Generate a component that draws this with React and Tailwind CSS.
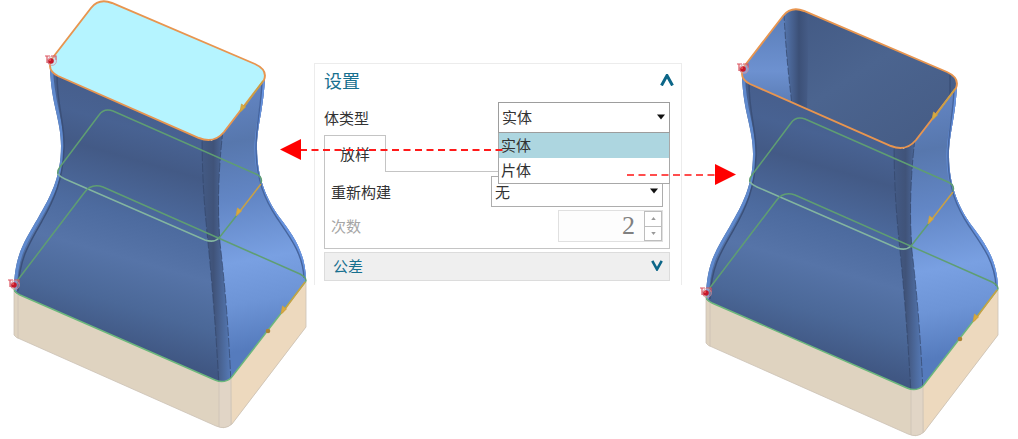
import React, { useState } from "react";

const bodyTypes = ["实体", "片体"];

const RIM =
  "M50 66 Q50 61 54 56 L91 8 Q99 -2 112 3 L255 64 Q268 70 264 80 L224 132 Q214 144 199 138 L58 76 Q50 72 50 66 Z";

const BODY =
  "M50 68 C51 104 61 120 61 146 C61 178 50 197 38 218 C24 242 14 256 14 291 Q15 293 20 295 L215 380 Q224 384 231 378 L306 281 C306 252 292 234 280 218 C267 200 257 178 257 148 C257 125 264 108 265 76 L212 141 Z";

const OriginMark = ({ x, y }) => (
  <g>
    <path d={`M${x - 6} ${y - 5}h5m-3 0v7m0 -4l2 5m2 -8h5v4`} stroke="#dc5560" strokeWidth="1.2" fill="none" />
    <circle cx={x + 1} cy={y} r="4.5" fill="#e8c0c8" fillOpacity="0.35" stroke="#c98a98" strokeOpacity="0.6" />
    <circle cx={x} cy={y} r="2.8" fill="#c5182a" />
    <circle cx={x - 1} cy={y - 1} r="1" fill="#ee5a5a" />
  </g>
);

const DirectionArrow = ({ x1, y1, x2, y2 }) => (
  <g stroke="#c9a144" fill="#d9aa3c">
    <path d={`M${x1} ${y1}L${x2} ${y2}`} strokeWidth="1.5" />
    <path d={`M${x2 - 1} ${y2 + 1}l1.500 -8 4 3z`} strokeWidth="0.8" />
  </g>
);

const LoftModel = ({ id, label, solid, shift, viewBox }) => (
  <svg viewBox={viewBox} className="block w-full h-auto" role="img" aria-label={label}>
    <defs>
      <linearGradient id={`${id}-front`} gradientUnits="userSpaceOnUse" x1="150" y1="90" x2="80" y2="335">
        <stop offset="0" stopColor="#465d8a" />
        <stop offset="0.16" stopColor="#486292" />
        <stop offset="0.28" stopColor="#435a86" />
        <stop offset="0.5" stopColor="#4d6b9f" />
        <stop offset="0.66" stopColor="#5674a8" />
        <stop offset="0.84" stopColor="#4b6898" />
        <stop offset="1" stopColor="#405783" />
      </linearGradient>
      <linearGradient id={`${id}-side`} gradientUnits="userSpaceOnUse" x1="230" y1="90" x2="275" y2="345">
        <stop offset="0" stopColor="#6385c3" />
        <stop offset="0.2" stopColor="#5777ad" />
        <stop offset="0.42" stopColor="#6286c5" />
        <stop offset="0.66" stopColor="#79a0e2" />
        <stop offset="0.82" stopColor="#6d94d6" />
        <stop offset="1" stopColor="#557bbd" />
      </linearGradient>
      <linearGradient id={`${id}-corner`} x1="0" y1="0" x2="1" y2="0">
        <stop offset="0" stopColor="#435a85" />
        <stop offset="0.4" stopColor="#405379" />
        <stop offset="1" stopColor="#567bb8" />
      </linearGradient>
      <linearGradient id={`${id}-inner`} x1="0" y1="0" x2="1" y2="1">
        <stop offset="0" stopColor="#405680" />
        <stop offset="0.5" stopColor="#4b648f" />
        <stop offset="1" stopColor="#455b84" />
      </linearGradient>
      <linearGradient id={`${id}-innerSide`} x1="0" y1="0" x2="0" y2="1">
        <stop offset="0" stopColor="#587bb5" />
        <stop offset="0.6" stopColor="#6d91d0" />
        <stop offset="1" stopColor="#5576ad" />
      </linearGradient>
      <linearGradient id={`${id}-fold`} x1="0" y1="0" x2="1" y2="0">
        <stop offset="0" stopColor="#5576ae" />
        <stop offset="0.6" stopColor="#3c5077" />
        <stop offset="1" stopColor="#465d88" />
      </linearGradient>
      <clipPath id={`${id}-body`}>
        <path d={BODY} />
      </clipPath>
      <clipPath id={`${id}-rim`}>
        <path d={RIM} />
      </clipPath>
    </defs>

    <g transform={shift}>
      {/* Base block */}
      <path d="M14 288 V335 Q16 338 20 339 L216 426 Q225 430 232 424 L306 327 V279 L224 381 Z" fill="#dfd3c0" />
      <path d="M231 378 L306 281 V327 L232 424 Z" fill="#edd9be" />
      <path d="M219 380 H231 V425 Q225 430 219 427 Z" fill="#e1d5c6" />
      <path
        d="M14 290 V335 Q16 338 20 339 L216 426 Q225 430 232 424 L306 327 V281 M18 295 V338 M219 381 V427 M231 379 V425"
        fill="none"
        stroke="#cbc2b5"
        strokeWidth="0.8"
      />

      {/* Lofted body */}
      <g clipPath={`url(#${id}-body)`}>
        <path d="M0 0 H320 V400 H0 Z" fill={`url(#${id}-front)`} />
        <path d="M220 120 Q217 190 220 243 Q223 310 231 400 H320 V60 H240 Z" fill={`url(#${id}-side)`} />
        <path
          d="M202 130 C202 190 206 220 208 243 Q214 300 219 385 H231 Q228 310 220 243 Q216 190 223 130 Z"
          fill={`url(#${id}-corner)`}
        />
        <path
          d="M50 68 C51 104 61 120 61 146 C61 178 50 197 38 218 C24 242 14 256 14 291"
          fill="none"
          stroke="#5f89cd"
          strokeWidth="6"
        />
        <path
          d="M57 74 C57 108 65 122 64 148 C63 180 54 200 42 221 C28 245 19 260 18 291"
          fill="none"
          stroke="#3b5079"
          strokeWidth="1.5"
        />
        <path
          d="M265 76 C264 108 257 125 257 148 C257 178 267 200 280 218 C292 234 306 252 306 281"
          fill="none"
          stroke="#6793df"
          strokeWidth="5"
        />
        <path
          d="M262 82 C261 108 256 125 256 148 C256 180 265 200 277 218 C290 237 303 254 304 278"
          fill="none"
          stroke="#46659e"
          strokeWidth="1.4"
        />
        <g fill="none" stroke="#34466a" strokeWidth="0.7" strokeDasharray="9 2">
          <path d="M202 130 C202 190 206 220 208 243 Q214 300 219 385" />
          <path d="M223 130 Q216 190 220 243 Q228 310 231 385" />
        </g>
      </g>

      {/* Section curves */}
      <g fill="none" strokeWidth="1.5">
        <path
          d="M58 174 Q57 171 60 167 L99 115 Q104 108 113 111 L256 174 Q263 177 261 183 M237 215 L219 238"
          stroke="#5f9e72"
        />
        <path d="M58 174 Q60 177 65 179 L205 240 Q214 243 219 238" stroke="#83b5a0" />
        <path d="M17 281 L84 193 Q91 183 103 187 L300 274 Q306 277 306 281" stroke="#5f9e72" />
        <path d="M14 288 Q14 292 20 295 L215 380 Q224 384 231 378 L306 281" stroke="#6cb77c" />
      </g>

      {/* Top rim, capped when solid */}
      {solid ? (
        <path d={RIM} fill="#b5f4ff" />
      ) : (
        <g clipPath={`url(#${id}-rim)`}>
          <path d={RIM} fill={`url(#${id}-inner)`} />
          <path d="M45 80 V50 L93 0 Q92 40 102 105 Z" fill={`url(#${id}-innerSide)`} />
          <path d="M92 0 H117 L115 105 H101 Q95 60 92 0 Z" fill={`url(#${id}-fold)`} />
          <path d="M92 6 Q94 50 101 105" fill="none" stroke="#34466a" strokeWidth="0.7" strokeDasharray="7 2" />
          <path d="M258 62 V90" stroke="#34496f" />
        </g>
      )}
      <path d={RIM} fill="none" stroke="#e8954f" strokeWidth="1.9" />

      <DirectionArrow x1={263} y1={81} x2={241} y2={111} />
      <DirectionArrow x1={261} y1={184} x2={237} y2={215} />
      <DirectionArrow x1={305} y1={282} x2={282} y2={313} />
      <circle cx="268" cy="331" r="2.3" fill="#a98435" />
      <OriginMark x={51} y={61} />
      <OriginMark x={14} y={285} />
    </g>
  </svg>
);

const Caret = () => (
  <svg viewBox="0 0 8 6" className="pointer-events-none absolute right-[5px] top-3 h-[6px] w-2" aria-hidden="true">
    <path d="M0 0.5 H8 L4 5.5 Z" fill="#111" />
  </svg>
);

const Chevron = ({ down }) => (
  <svg viewBox="0 0 14 12" className={down ? "h-[11px] w-3 rotate-180" : "h-3 w-[14px]"} aria-hidden="true">
    <path d="M1.500 11.500 L7 1.500 L12.500 11.500" fill="none" stroke="#0c6688" strokeWidth="3" />
  </svg>
);

const SettingsPanel = () => {
  const [bodyType, setBodyType] = useState("实体");
  const [rebuild, setRebuild] = useState("无");

  return (
    <section className="relative mt-[63px] border border-b-0 border-[#ececec] bg-white pb-1 pl-[9px] pr-[11px] text-[15px] leading-5 text-[#333]">
      <header className="flex h-[38px] items-center justify-between pb-[7px]">
        <h2 className="text-[18px] leading-6 text-[#17708f]">设置</h2>
        <button type="button" aria-label="收起设置" className="-mr-1">
          <Chevron />
        </button>
      </header>

      {/* Body type with its open list */}
      <div className="flex h-[31px] items-center justify-between">
        <label htmlFor="body-type">体类型</label>
        <div className="relative w-[172px]">
          <select
            id="body-type"
            value={bodyType}
            onChange={(e) => setBodyType(e.target.value)}
            className="block h-[31px] w-full appearance-none border border-[#9d9d9d] bg-white px-[3px] pb-[2px]"
          >
            {bodyTypes.map((type) => (
              <option key={type}>{type}</option>
            ))}
          </select>
          <Caret />
          <ul
            role="listbox"
            aria-label="体类型"
            className="absolute left-0 top-full z-10 w-full border border-t-0 border-[#a8a8a8] bg-white"
          >
            {bodyTypes.map((type) => (
              <li
                key={type}
                role="option"
                aria-selected={type === bodyType}
                onClick={() => setBodyType(type)}
                className={`h-[25px] px-[2px] leading-6 ${type === bodyType ? "bg-[#add6e0]" : "bg-white"}`}
              >
                {type}
              </li>
            ))}
          </ul>
        </div>
      </div>

      {/* Loft tab */}
      <div className="mt-[2px] flex">
        <button type="button" className="h-[37px] w-[62px] border border-b-0 border-[#c4c4c4]">
          放样
        </button>
        <div className="flex-1 border-b border-[#c4c4c4]"></div>
      </div>
      <div className="border border-t-0 border-[#c4c4c4] px-[6px] pb-[6px] pt-1">
        <div className="flex h-[31px] items-center justify-between">
          <label htmlFor="rebuild">重新构建</label>
          <div className="relative w-[172px]">
            <select
              id="rebuild"
              value={rebuild}
              onChange={(e) => setRebuild(e.target.value)}
              className="block h-[31px] w-full appearance-none border border-[#adadad] bg-white px-[3px]"
            >
              <option>无</option>
            </select>
            <Caret />
          </div>
        </div>
        <div className="mt-[3px] flex h-8 items-center justify-between">
          <label htmlFor="degree" className="text-[#a6a6a6]">
            次数
          </label>
          <div className="flex h-8 w-[105px] border border-[#e0e0e0]">
            <input
              id="degree"
              type="text"
              defaultValue="2"
              disabled
              className="min-w-0 flex-1 bg-[#fdfdfd] pr-[9px] text-right font-['Liberation_Serif',serif] text-[26px] leading-7 text-[#808080]"
            />
            <div className="flex w-[18px] flex-col border border-[#bdbdbd]">
              <button type="button" aria-label="增加" className="flex flex-1 items-center justify-center border-b border-[#bdbdbd]">
                <svg viewBox="0 0 6 4" className="h-[3px] w-[5px]" aria-hidden="true">
                  <path d="M0 4 H6 L3 0 Z" fill="#999" />
                </svg>
              </button>
              <button type="button" aria-label="减少" className="flex flex-1 items-center justify-center">
                <svg viewBox="0 0 6 4" className="h-[3px] w-[5px]" aria-hidden="true">
                  <path d="M0 0 H6 L3 4 Z" fill="#999" />
                </svg>
              </button>
            </div>
          </div>
        </div>
      </div>

      {/* Collapsed tolerance group */}
      <button
        type="button"
        className="mt-[3px] flex h-[29px] w-full items-center justify-between border border-[#dcdcdc] bg-[#efefef] pb-[2px] pl-2 pr-[6px] text-[#17708f]"
      >
        公差
        <Chevron down />
      </button>

      {/* Callout arrows to both models */}
      <svg
        viewBox="0 0 460 50"
        className="pointer-events-none absolute left-[-35px] top-[74px] z-20 h-[50px] w-[460px] max-w-none"
        aria-hidden="true"
      >
        <path d="M20 12 H226" stroke="#ff1a1a" strokeWidth="2" strokeDasharray="7 4.500" />
        <path d="M0 11.500 L21 1 V22 Z" fill="#ff0000" />
        <path d="M347 37 H436" stroke="#ff4d4d" strokeWidth="2" strokeDasharray="7 4.500" />
        <path d="M456 36.500 L435 26 V47 Z" fill="#ff0000" />
      </svg>
    </section>
  );
};

const App = () => (
  <main className="grid min-w-[900px] grid-cols-[314fr_368fr_336fr] items-start bg-white font-['Noto_Sans_CJK_SC',sans-serif]">
    <LoftModel id="solid" label="实体" solid viewBox="0 0 314 439" />
    <SettingsPanel />
    <LoftModel id="sheet" label="片体" shift="translate(10 8)" viewBox="0 0 336 439" />
  </main>
);

export default App;
